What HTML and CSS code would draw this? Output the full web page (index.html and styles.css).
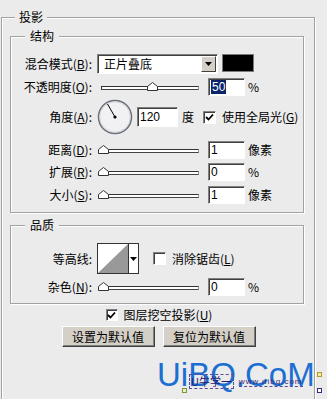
FILE: index.html
```html
<!DOCTYPE html>
<html lang="zh-CN">
  <head>
    <meta charset="UTF-8" />
    <title>投影</title>
    <link rel="stylesheet" href="styles.css">
  </head>
  <body>
    <div class="page">
      <fieldset class="group outer">
        <legend>投影</legend>

        <fieldset class="group inner">
          <legend>结构</legend>

          <div class="row">
            <span class="lbl">混合模式(<u>B</u>):</span>
            <div class="select">
              <span class="select-val">正片叠底</span>
              <span class="select-btn">
                <svg width="7" height="4" viewBox="0 0 7 4"><path d="M0 0h7L3.5 4z" fill="#000"/></svg>
              </span>
            </div>
            <span class="swatch"></span>
          </div>

          <div class="row r2">
            <span class="lbl">不透明度(<u>O</u>):</span>
            <div class="slider">
              <div class="track"></div>
              <svg class="thumb" style="left:49px" width="11" height="9" viewBox="0 0 11 9"><path d="M.5 8.5v-4l5-4 5 4v4z" fill="#fff" stroke="#333"/></svg>
            </div>
            <span class="num"><span class="sel">50</span></span>
            <span class="unit">%</span>
          </div>

          <div class="row angle">
            <span class="lbl">角度(<u>A</u>):</span>
            <svg class="dial" width="36" height="36" viewBox="0 0 36 36">
              <circle cx="18" cy="18" r="16.5" fill="#f1f1f3" stroke="#6b6f7a" stroke-width="1.5"/>
              <circle cx="18" cy="18" r="15.3" fill="none" stroke="#c9cbd2" stroke-width="0.8"/>
              <path d="M18 18L10.5 5" stroke="#000" stroke-width="1"/>
              <circle cx="18" cy="18" r="1.6" fill="#000"/>
            </svg>
            <span class="num wide">120</span>
            <span class="unit">度</span>
            <span class="check on">
              <svg width="9" height="9" viewBox="0 0 9 9"><path d="M1 4l2.5 2.5L8 1.5" fill="none" stroke="#000" stroke-width="1.8"/></svg>
            </span>
            <span class="check-lbl">使用全局光(<u>G</u>)</span>
          </div>

          <div class="row r4">
            <span class="lbl">距离(<u>D</u>):</span>
            <div class="slider">
              <div class="track"></div>
              <svg class="thumb" style="left:0" width="11" height="9" viewBox="0 0 11 9"><path d="M.5 8.5v-4l5-4 5 4v4z" fill="#fff" stroke="#333"/></svg>
            </div>
            <span class="num">1</span>
            <span class="unit">像素</span>
          </div>

          <div class="row r5">
            <span class="lbl">扩展(<u>R</u>):</span>
            <div class="slider">
              <div class="track"></div>
              <svg class="thumb" style="left:0" width="11" height="9" viewBox="0 0 11 9"><path d="M.5 8.5v-4l5-4 5 4v4z" fill="#fff" stroke="#333"/></svg>
            </div>
            <span class="num">0</span>
            <span class="unit">%</span>
          </div>

          <div class="row r6">
            <span class="lbl">大小(<u>S</u>):</span>
            <div class="slider">
              <div class="track"></div>
              <svg class="thumb" style="left:0" width="11" height="9" viewBox="0 0 11 9"><path d="M.5 8.5v-4l5-4 5 4v4z" fill="#fff" stroke="#333"/></svg>
            </div>
            <span class="num">1</span>
            <span class="unit">像素</span>
          </div>
        </fieldset>

        <fieldset class="group quality">
          <legend>品质</legend>

          <div class="row contour">
            <span class="lbl">等高线:</span>
            <div class="curve">
              <svg class="curve-img" width="30" height="29" viewBox="0 0 30 29"><path d="M0 29L30 0v29z" fill="#999"/></svg>
              <span class="curve-btn">
                <svg width="7" height="4" viewBox="0 0 7 4"><path d="M0 0h7L3.5 4z" fill="#000"/></svg>
              </span>
            </div>
            <span class="check"></span>
            <span class="check-lbl">消除锯齿(<u>L</u>)</span>
          </div>

          <div class="row r2">
            <span class="lbl">杂色(<u>N</u>):</span>
            <div class="slider">
              <div class="track"></div>
              <svg class="thumb" style="left:0" width="11" height="9" viewBox="0 0 11 9"><path d="M.5 8.5v-4l5-4 5 4v4z" fill="#fff" stroke="#333"/></svg>
            </div>
            <span class="num">0</span>
            <span class="unit">%</span>
          </div>
        </fieldset>

        <div class="knockout">
          <span class="check on">
            <svg width="9" height="9" viewBox="0 0 9 9"><path d="M1 4l2.5 2.5L8 1.5" fill="none" stroke="#000" stroke-width="1.8"/></svg>
          </span>
          <span class="check-lbl">图层挖空投影(<u>U</u>)</span>
        </div>

        <div class="buttons">
          <span class="btn">设置为默认值</span>
          <span class="btn">复位为默认值</span>
        </div>
      </fieldset>

      <!-- watermark over the dialog -->
      <div class="mark">UiBQ.CoM</div>
      <div class="mark-sub"><span class="mark-cn">U牛学一</span><span class="mark-url">www.uibq.com</span></div>
      <span class="handle h1"></span>
      <span class="handle h2"></span>
      <span class="handle h3"></span>
    </div>
  </body>
</html>
```

FILE: styles.css
```css
* {
  margin: 0;
  padding: 0;
  box-sizing: border-box;
}

body {
  background: #ebebeb;
  font-family: "Noto Sans CJK SC", "Liberation Sans", sans-serif;
  font-size: 12px;
  line-height: 14px;
  color: #000;
  overflow: hidden;
}

.page {
  position: relative;
  width: 327px;
  height: 399px;
  padding: 10px 0 0 1px;
  overflow: hidden;
}

.group {
  border: 1px solid #a2a2a2;
  box-shadow: 1px 1px 0 #fff, inset 1px 1px 0 #fff;
}

.group > legend {
  padding: 0 4px;
  line-height: 14px;
  background: #ebebeb;
}

.outer {
  width: 314px;
  height: 420px;
}

.outer > legend {
  margin-left: 13px;
}

.inner,
.quality {
  margin: 5px 10px 0 8px;
  padding: 11px 0 7px;
}

.quality {
  padding-bottom: 6px;
}

.inner > legend,
.quality > legend {
  margin-left: 14px;
  padding: 0 5px;
}

.row {
  display: flex;
  align-items: center;
  height: 20px;
}

.r2 { margin-top: 3px; }
.r4 { margin-top: 5px; }
.r5 { margin-top: 2px; }
.r6 { margin-top: 3px; }

.angle {
  height: 36px;
  margin-top: 2px;
}

.contour {
  height: 31px;
}

.lbl {
  width: 81px;
  text-align: right;
  white-space: nowrap;
}

u {
  text-decoration: underline;
  text-underline-offset: 1px;
}

/* select */
.select {
  display: flex;
  width: 121px;
  height: 20px;
  margin-left: 5px;
  background: #fff;
  border: 1px solid;
  border-color: #808080 #fff #fff #808080;
  box-shadow: inset 1px 1px 0 #404040;
}

.select-val {
  flex: 1;
  padding: 2px 0 0 6px;
}

.select-btn {
  display: flex;
  align-items: center;
  justify-content: center;
  width: 15px;
  height: 16px;
  margin: 1px 1px 0 0;
  background: #d4d0c8;
  border: 1px solid;
  border-color: #fff #404040 #404040 #fff;
}

.swatch {
  width: 32px;
  height: 18px;
  margin: -2px 0 0 4px;
  background: #000;
  border: 1px solid #7a7a7a;
}

/* slider */
.slider {
  position: relative;
  width: 104px;
  height: 20px;
  margin-left: 6px;
}

.track {
  position: absolute;
  left: 3px;
  right: 3px;
  top: 9px;
  height: 4px;
  background: #fff;
  border: 1px solid;
  border-color: #333 #999 #444 #333;
}

.thumb {
  position: absolute;
  top: 5px;
}

/* number boxes */
.num {
  width: 37px;
  height: 18px;
  margin-left: 6px;
  padding: 1px 0 0 2px;
  background: #fff;
  border: 1px solid;
  border-color: #808080 #fff #fff #808080;
  box-shadow: inset 1px 1px 0 #404040;
  font-family: "Liberation Sans", sans-serif;
  font-size: 12px;
  line-height: 14px;
}

.num.wide {
  width: 41px;
  height: 20px;
  margin-left: 4px;
  padding-top: 2px;
}

.sel {
  background: #0a246a;
  color: #fff;
  padding: 0 1px;
}

.unit {
  margin-left: 3px;
  font-size: 12px;
}

.angle .unit {
  margin-left: 4px;
}

.dial {
  margin-left: 5px;
}

/* checkboxes */
.check {
  display: flex;
  align-items: center;
  justify-content: center;
  width: 13px;
  height: 13px;
  background: #fff;
  border: 1px solid;
  border-color: #808080 #fff #fff #808080;
  box-shadow: inset 1px 1px 0 #404040;
}

.angle .check {
  margin-left: 9px;
}

.check-lbl {
  margin-left: 6px;
  white-space: nowrap;
}

/* contour picker */
.curve {
  display: flex;
  width: 42px;
  height: 31px;
  margin-left: 5px;
  background: #fff;
  border: 1px solid #333;
}

.curve-btn {
  display: flex;
  align-items: center;
  justify-content: center;
  flex: 1;
  border-left: 1px solid #333;
}

.contour .check {
  margin-left: 14px;
}

/* bottom */
.knockout {
  display: flex;
  align-items: center;
  justify-content: center;
  height: 16px;
  margin-top: 3px;
  padding-left: 2px;
}

.knockout .check {
  width: 12px;
  height: 12px;
}

.buttons {
  display: flex;
  justify-content: center;
  gap: 8px;
  margin-top: 3px;
  padding-left: 1px;
}

.btn {
  width: 93px;
  height: 21px;
  padding-top: 3px;
  text-align: center;
  background: #d4d0c8;
  border: 1px solid;
  border-color: #fff #404040 #404040 #fff;
  box-shadow: inset -1px -1px 0 #808080;
}

/* watermark */
.mark {
  position: absolute;
  left: 157px;
  top: 358px;
  font-family: "Liberation Sans", sans-serif;
  font-size: 33px;
  line-height: 33px;
  color: #1b6fd2;
  white-space: nowrap;
}

.mark-sub {
  position: absolute;
  left: 189px;
  top: 374px;
  display: flex;
  align-items: flex-end;
  white-space: nowrap;
}

.mark-cn {
  font-size: 11px;
  line-height: 13px;
  color: #2a1a6a;
  border: 1px dashed #5a4a9a;
  padding: 0 1px;
}

.mark-url {
  margin: 0 0 2px 5px;
  font-family: "Liberation Sans", sans-serif;
  font-size: 8px;
  line-height: 9px;
  color: #3a2a7a;
  letter-spacing: 1px;
  border-bottom: 1px dashed #5a4a9a;
}

.handle {
  position: absolute;
  width: 5px;
  height: 5px;
  border: 1px solid #7a9a3a;
  background: #e8f0c8;
}

.h1 { left: 182px; top: 388px; }
.h2 { left: 317px; top: 372px; border-color: #b89a2a; background: #f6e8a0; }
.h3 { left: 317px; top: 388px; border-color: #3a2a7a; background: #fff; }
```
